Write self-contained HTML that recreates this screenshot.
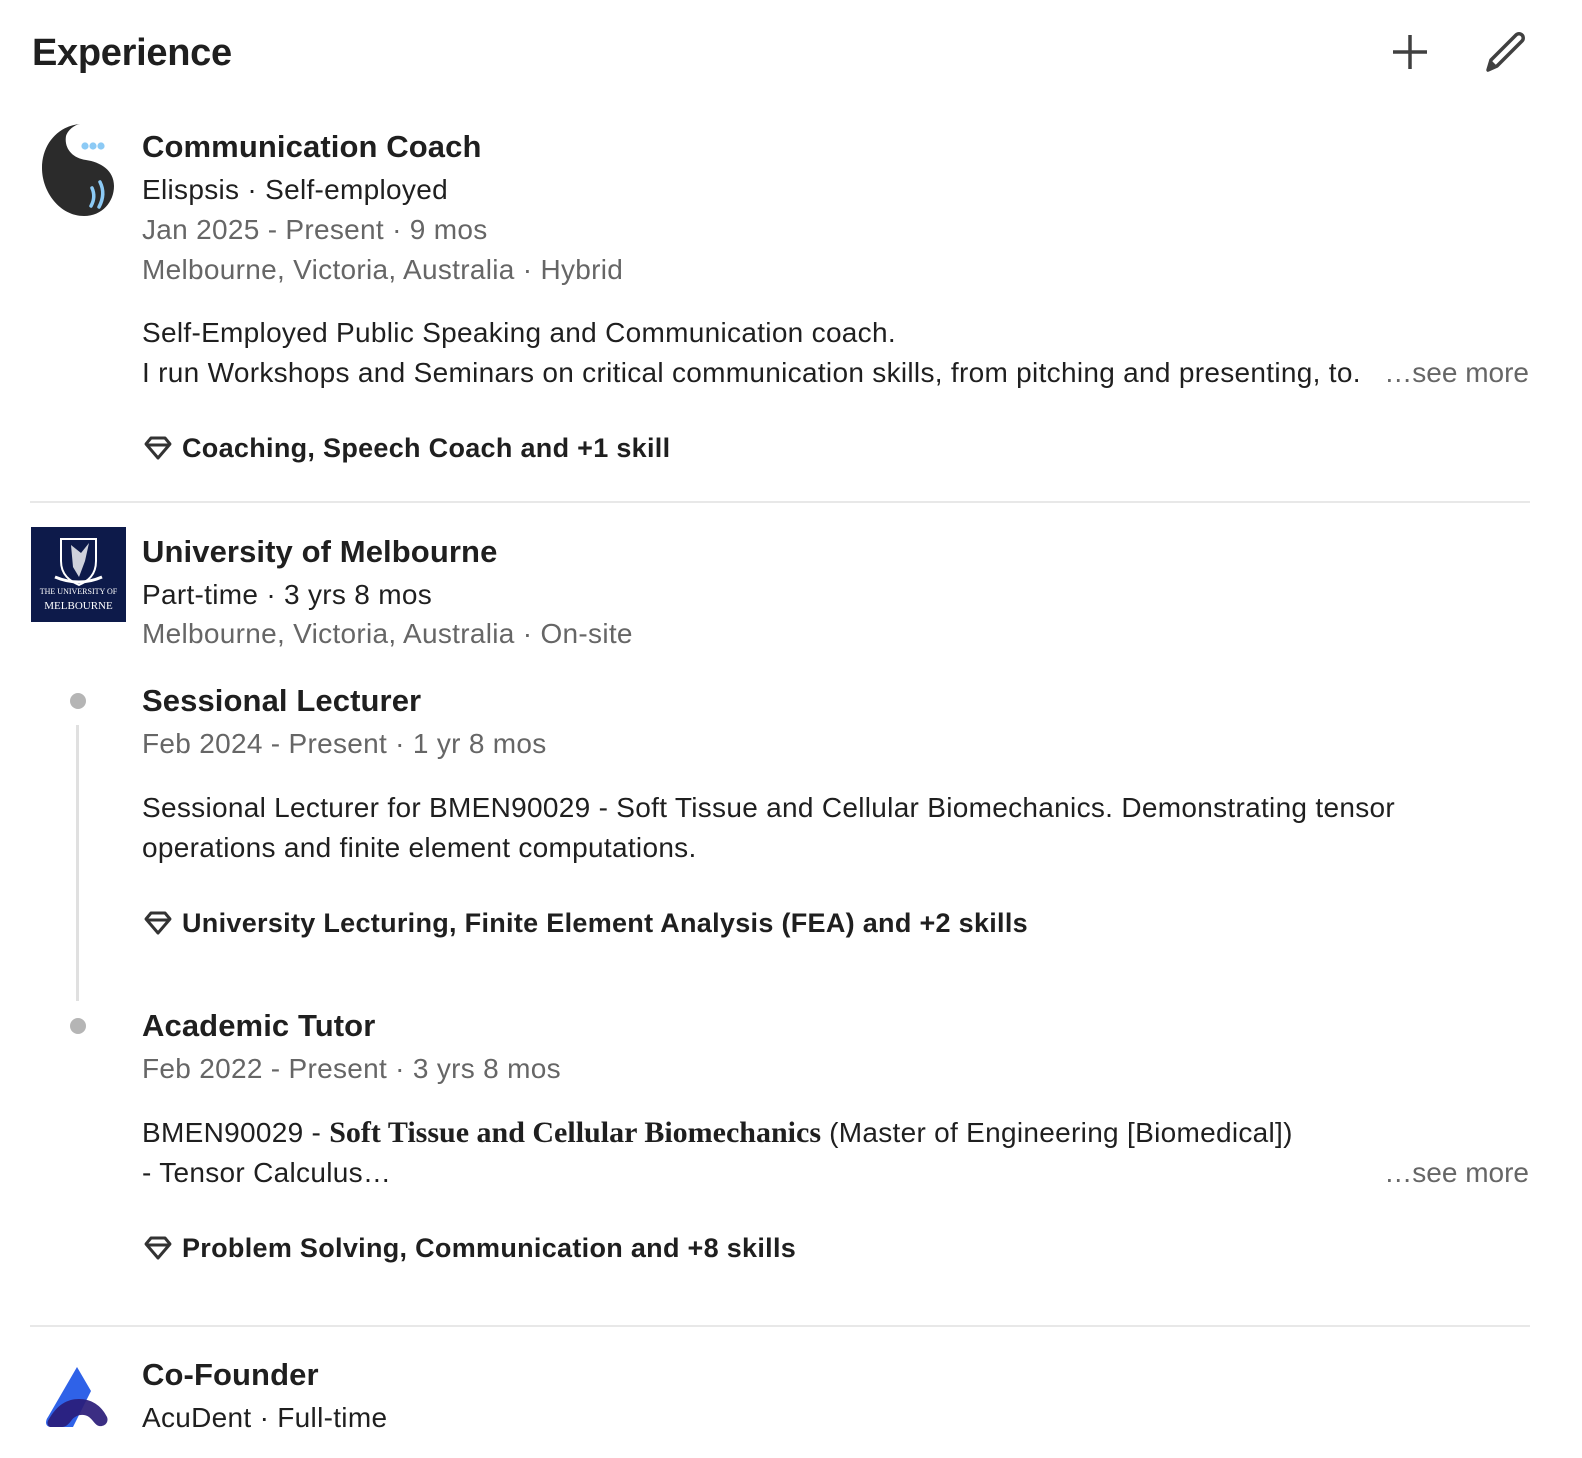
<!DOCTYPE html>
<html><head><meta charset="utf-8"><style>
body{margin:0;width:1582px;height:1458px;background:#fff;font-family:"Liberation Sans",sans-serif;color:#1f1f1f;position:relative;overflow:hidden}
.a{position:absolute;white-space:nowrap;line-height:40px}
.h{font-size:38px;font-weight:bold;letter-spacing:-0.3px}
.t{font-size:31px;font-weight:bold;letter-spacing:0.1px}
.b{font-size:28px;letter-spacing:0.3px}
.g{font-size:28px;letter-spacing:0.3px;color:#666}
.s{font-size:27px;font-weight:bold;letter-spacing:0.3px}
.m{font-size:28px;color:#666}
.hr{position:absolute;left:30px;width:1500px;height:2px;background:#e8e8e8}
.dot{position:absolute;width:16px;height:16px;border-radius:50%;background:#b5b5b5;left:70px}
</style></head><body>
<div class="a h" style="left:32px;top:33px">Experience</div>
<svg style="position:absolute;left:1390px;top:32px" width="40" height="40" viewBox="0 0 40 40"><path d="M20 3v34M3 20h34" stroke="#404040" stroke-width="3.5"/></svg>
<svg style="position:absolute;left:1484px;top:30px" width="44" height="44" viewBox="0 0 44 44"><path d="M4 40l3-10L32 5a4 4 0 0 1 6 6L13 36z" fill="none" stroke="#404040" stroke-width="3.5" stroke-linejoin="round"/><path d="M4 40l3-10 6 6z" fill="#404040"/></svg>

<svg style="position:absolute;left:38px;top:120px" width="80" height="100" viewBox="0 0 80 100"><path d="M42 4C20 6 4 24 4 48c0 24 18 48 42 48 18 0 30-14 30-30 0-16-14-24-28-26-14-2-22-12-20-24 2-6 8-11 14-12z" fill="#2b2b2b"/><circle cx="47" cy="26" r="3.6" fill="#8ccaf5"/><circle cx="55" cy="26" r="3.6" fill="#8ccaf5"/><circle cx="63" cy="26" r="3.6" fill="#8ccaf5"/><path d="M54 68q4 9-1 18M62 62q6 12-1 25" stroke="#8ccaf5" stroke-width="3.5" fill="none" stroke-linecap="round"/></svg>
<div class="a t" style="left:142px;top:127px">Communication Coach</div>
<div class="a b" style="left:142px;top:170px">Elispsis · Self-employed</div>
<div class="a g" style="left:142px;top:210px">Jan 2025 - Present · 9 mos</div>
<div class="a g" style="left:142px;top:250px">Melbourne, Victoria, Australia · Hybrid</div>
<div class="a b" style="left:142px;top:313px">Self-Employed Public Speaking and Communication coach.</div>
<div class="a b" style="left:142px;top:353px;width:1232px;overflow:hidden">I run Workshops and Seminars on critical communication skills, from pitching and presenting, to.</div>
<div class="a m" style="right:53px;top:353px">…see more</div>
<svg style="position:absolute;left:144px;top:435px" width="28" height="26" viewBox="0 0 28 26"><path d="M7 3h14l5 6-12 14L2 9z" fill="none" stroke="#333" stroke-width="3" stroke-linejoin="round"/><path d="M4 10h20" stroke="#333" stroke-width="3"/></svg>
<div class="a s" style="left:182px;top:428px">Coaching, Speech Coach and +1 skill</div>
<div class="hr" style="top:501px"></div>

<div style="position:absolute;left:31px;top:527px;width:95px;height:95px;background:#0d1a4a"><svg width="95" height="95" viewBox="0 0 95 95"><path d="M30 12h35v22c0 14-8 20-17 24-9-4-18-10-18-24z" fill="none" stroke="#fff" stroke-width="2"/><path d="M40 18l10 8 8-10-4 18-6 16-6-10z" fill="#fff" opacity=".8"/><path d="M24 50q24 10 47 0" stroke="#fff" stroke-width="3" fill="none"/><text x="47.5" y="67" fill="#fff" font-size="8" text-anchor="middle" font-family="Liberation Serif">THE UNIVERSITY OF</text><text x="47.5" y="82" fill="#fff" font-size="11" text-anchor="middle" font-family="Liberation Serif">MELBOURNE</text></svg></div>
<div class="a t" style="left:142px;top:532px">University of Melbourne</div>
<div class="a b" style="left:142px;top:575px">Part-time · 3 yrs 8 mos</div>
<div class="a g" style="left:142px;top:614px">Melbourne, Victoria, Australia · On-site</div>
<div class="dot" style="top:693px"></div>
<div style="position:absolute;left:76px;top:725px;width:3px;height:276px;background:#e0e0e0"></div>
<div class="a t" style="left:142px;top:681px">Sessional Lecturer</div>
<div class="a g" style="left:142px;top:724px">Feb 2024 - Present · 1 yr 8 mos</div>
<div class="a b" style="left:142px;top:788px">Sessional Lecturer for BMEN90029 - Soft Tissue and Cellular Biomechanics. Demonstrating tensor</div>
<div class="a b" style="left:142px;top:828px">operations and finite element computations.</div>
<svg style="position:absolute;left:144px;top:910px" width="28" height="26" viewBox="0 0 28 26"><path d="M7 3h14l5 6-12 14L2 9z" fill="none" stroke="#333" stroke-width="3" stroke-linejoin="round"/><path d="M4 10h20" stroke="#333" stroke-width="3"/></svg>
<div class="a s" style="left:182px;top:903px">University Lecturing, Finite Element Analysis (FEA) and +2 skills</div>
<div class="dot" style="top:1018px"></div>
<div class="a t" style="left:142px;top:1006px">Academic Tutor</div>
<div class="a g" style="left:142px;top:1049px">Feb 2022 - Present · 3 yrs 8 mos</div>
<div class="a b" style="left:142px;top:1113px">BMEN90029 - <b style="font-family:'Liberation Serif',serif;font-size:30px;letter-spacing:0">Soft Tissue and Cellular Biomechanics</b> (Master of Engineering [Biomedical])</div>
<div class="a b" style="left:142px;top:1153px">- Tensor Calculus…</div>
<div class="a m" style="right:53px;top:1153px">…see more</div>
<svg style="position:absolute;left:144px;top:1235px" width="28" height="26" viewBox="0 0 28 26"><path d="M7 3h14l5 6-12 14L2 9z" fill="none" stroke="#333" stroke-width="3" stroke-linejoin="round"/><path d="M4 10h20" stroke="#333" stroke-width="3"/></svg>
<div class="a s" style="left:182px;top:1228px">Problem Solving, Communication and +8 skills</div>
<div class="hr" style="top:1325px"></div>

<svg style="position:absolute;left:45px;top:1365px" width="66" height="66" viewBox="0 0 66 66"><path d="M32 2l14 24-18 36H6c-6 0-6-6-3-10z" fill="#2f62e8"/><path d="M6 62c-3 0-5-4-2-8 8-14 18-20 30-20s22 6 28 18c2 5-2 10-8 9-4-1-6-6-10-9-6-4-14-2-18 4-4 5-6 6-10 6z" fill="#2a1c78" opacity=".92"/></svg>
<div class="a t" style="left:142px;top:1355px">Co-Founder</div>
<div class="a b" style="left:142px;top:1398px">AcuDent · Full-time</div>
</body></html>
